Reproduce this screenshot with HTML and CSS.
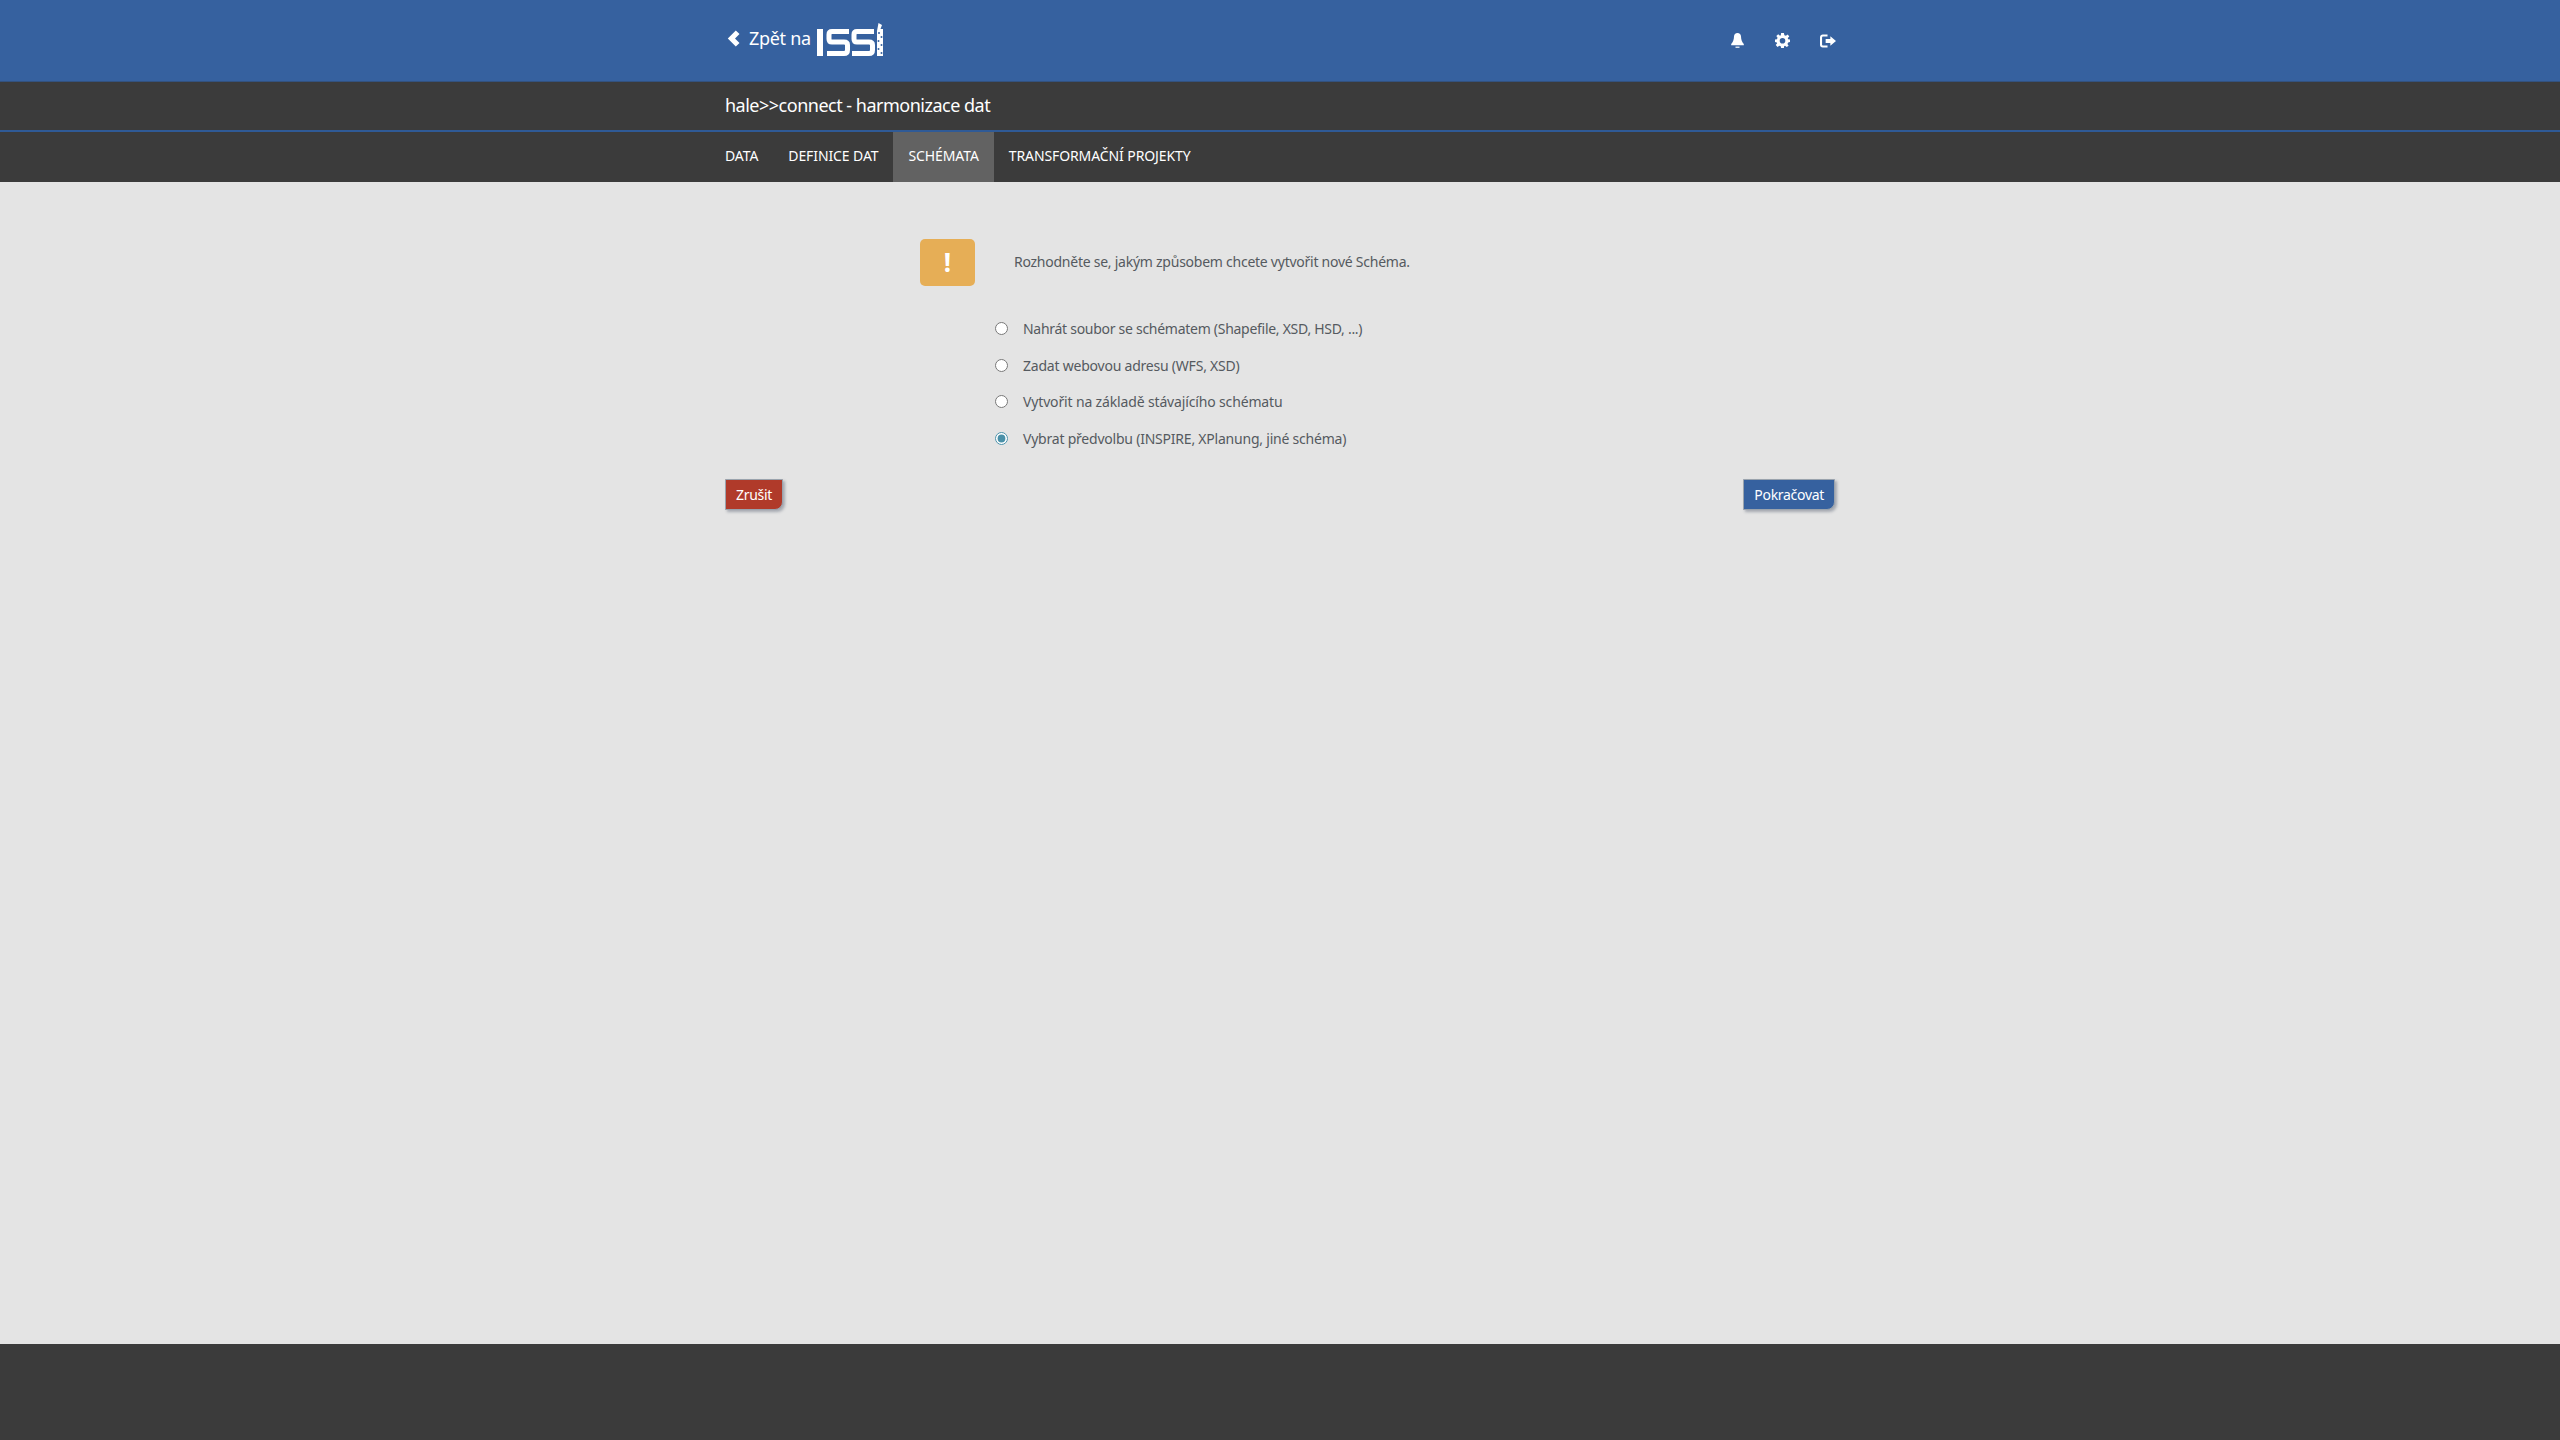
FILE: index.html
```html
<!DOCTYPE html>
<html lang="cs">
<head>
<meta charset="utf-8">
<title>hale connect</title>
<link rel="stylesheet" href="styles.css">
</head>
<body>
<div class="page">
  <header class="topbar">
    <div class="container topbar-in">
      <a class="back">
        <svg class="chev" viewBox="0 0 13 17" width="13" height="17"><path d="M8.8 0.5 L0.8 8.5 L8.8 16.5 L12.5 13 L8 8.5 L12.5 4 Z" fill="#fff"/></svg>
        <span class="back-text">Zpět na</span>
        <svg class="logo" viewBox="0 0 66 33" width="66" height="33">
          <rect x="0" y="6" width="6" height="27" fill="#fff"/>
          <path d="M32 8.5 H15 Q12 8.5 12 11.5 V16 Q12 19 15 19 H27 Q30.5 19 30.5 22 V27 Q30.5 30.5 27 30.5 H10" fill="none" stroke="#fff" stroke-width="5"/>
          <path d="M57 8.5 H40 Q37 8.5 37 11.5 V16 Q37 19 40 19 H52 Q55.5 19 55.5 22 V27 Q55.5 30.5 52 30.5 H35" fill="none" stroke="#fff" stroke-width="5"/>
          <path d="M60 33 V8 L61.5 0 L65 2 L63.5 6 H66 V33 Z" fill="#fff"/>
          <g fill="#36619f"><circle cx="62" cy="10" r="1"/><circle cx="64.5" cy="14" r="1"/><circle cx="61.5" cy="18" r="1"/><circle cx="64.5" cy="22" r="1"/><circle cx="61.5" cy="26" r="1"/><circle cx="64.5" cy="30" r="1"/></g>
        </svg>
      </a>
      <div class="tools">
        <svg class="bell" viewBox="0 0 13 15" width="13" height="15"><path d="M6.5 0 C4.4 0 3.1 1.4 3 3.6 C2.9 7 2 9 0.2 11 V12.2 H12.8 V11 C11 9 10.1 7 10 3.6 C9.9 1.4 8.6 0 6.5 0 Z" fill="#fff"/><rect x="4.5" y="13.6" width="4" height="1.2" fill="#fff"/></svg>
        <svg viewBox="0 0 16 16" width="15" height="15"><path fill="#fff" fill-rule="evenodd" d="M6.5 0 H9.5 L10 2.3 L11.6 3 L13.6 1.7 L15.2 3.6 L13.6 5.4 L14 6.6 L16 7 V9.6 L14 10 L13.3 11.6 L14.5 13.5 L12.5 15 L10.7 13.6 L9.7 14 L9.5 16 H6.5 L6.1 14 L4.6 13.5 L2.7 14.8 L0.8 12.7 L2.3 11 L1.9 10 L0 9.6 V7 L2.1 6.6 L2.7 5 L1.4 3.1 L3.4 1.4 L5.3 2.8 L6.2 2.4 Z M8 5.2 A3 3 0 1 0 8 11.2 A3 3 0 1 0 8 5.2 Z"/></svg>
        <svg viewBox="0 0 17 14" width="16" height="14"><path fill="#fff" d="M8 0 H3 C1.2 0 0 1.2 0 3 V11 C0 12.8 1.2 14 3 14 H8 V11.8 H3.4 C2.6 11.8 2.2 11.4 2.2 10.6 V3.4 C2.2 2.6 2.6 2.2 3.4 2.2 H8 Z"/><path fill="#fff" d="M6 5 H11 V2 L17 7 L11 12 V9 H6 Z"/></svg>
      </div>
    </div>
  </header>
  <div class="titlebar">
    <div class="container title">hale&gt;&gt;connect - harmonizace dat</div>
  </div>
  <nav class="nav">
    <div class="container nav-in">
      <a class="tab first">DATA</a>
      <a class="tab">DEFINICE DAT</a>
      <a class="tab active">SCHÉMATA</a>
      <a class="tab">TRANSFORMAČNÍ PROJEKTY</a>
    </div>
  </nav>
  <main class="main">
    <div class="container">
      <div class="prompt">
        <div class="warn">!</div>
        <p class="prompt-text">Rozhodněte se, jakým způsobem chcete vytvořit nové Schéma.</p>
      </div>
      <form class="options">
        <label class="opt"><input type="radio" name="m"><span class="tight">Nahrát soubor se schématem (Shapefile, XSD, HSD, ...)</span></label>
        <label class="opt"><input type="radio" name="m"><span>Zadat webovou adresu (WFS, XSD)</span></label>
        <label class="opt"><input type="radio" name="m"><span class="loose">Vytvořit na základě stávajícího schématu</span></label>
        <label class="opt"><input type="radio" name="m" checked><span>Vybrat předvolbu (INSPIRE, XPlanung, jiné schéma)</span></label>
      </form>
      <div class="actions">
        <button class="btn red" type="button">Zrušit</button>
        <button class="btn blue" type="button">Pokračovat</button>
      </div>
    </div>
  </main>
  <footer class="footer"></footer>
</div>
</body>
</html>
```
FILE: styles.css
```css
* { box-sizing: border-box; }
html, body { margin: 0; height: 100%; }
body { font-family: "Noto Sans", "Open Sans", sans-serif; background: #e4e4e4; color: #555a60; }
.page { display: flex; flex-direction: column; height: 1440px; }
.container { width: 1110px; margin: 0 auto; }
.topbar { height: 82px; background: #36619f; border-bottom: 1px solid #33527f; flex: none; }
.topbar-in { height: 81px; display: flex; align-items: center; justify-content: space-between; }
.back { display: flex; align-items: center; color: #fff; }
.chev { margin: -4px 0 0 2px; }
.back-text { font-size: 18px; margin: -5px 0 0 9px; letter-spacing: -.3px; }
.logo { margin: -3px 0 0 6px; }
.tools { display: flex; align-items: center; gap: 30px; margin-right: -1px; }
.bell { margin-right: 1px; }
.titlebar { height: 50px; background: #3b3b3b; border-bottom: 2px solid #2f5a96; flex: none; }
.title { color: #fff; font-size: 18px; line-height: 47px; letter-spacing: -.5px; }
.nav { height: 50px; background: #3b3b3b; flex: none; }
.nav-in { display: flex; height: 50px; }
.tab { color: #fff; font-size: 14px; line-height: 48px; padding: 0 15px; letter-spacing: -.1px; }
.tab.first { padding-left: 0; }
.tab.active { background: #626262; }
.main { flex: 1; padding-top: 57px; }
.prompt { display: flex; align-items: center; margin-left: 195px; gap: 39px; }
.warn { width: 55px; height: 47px; background: #e6ae56; border-radius: 5px; color: #fff; font-weight: 700; font-size: 26px; line-height: 47px; text-align: center; }
.prompt-text { margin: 0 0 3px; font-size: 14px; letter-spacing: -.25px; }
.options { margin: 25px 0 0 270px; display: flex; flex-direction: column; }
.opt { display: flex; align-items: center; height: 36.6px; font-size: 14px; letter-spacing: -.22px; }
.opt input { width: 13px; height: 13px; margin: -1px 15px 0 0; accent-color: #4a90a8; }
.opt span { margin-top: -1px; }
.opt .tight { letter-spacing: -.28px; }
.opt .loose { letter-spacing: -.15px; }
.actions { display: flex; justify-content: space-between; margin-top: 22px; }
.btn { height: 31px; border: 1px solid #9aa3ad; color: #fff; font: 14px "Noto Sans", sans-serif; letter-spacing: -.3px; padding: 0 10px; border-radius: 0 0 8px 0; box-shadow: 2px 2px 3px rgba(70,80,100,.4); }
.red { background: #b03a2a; }
.blue { background: #36619f; }
.footer { height: 96px; background: #3b3b3b; flex: none; }
```
